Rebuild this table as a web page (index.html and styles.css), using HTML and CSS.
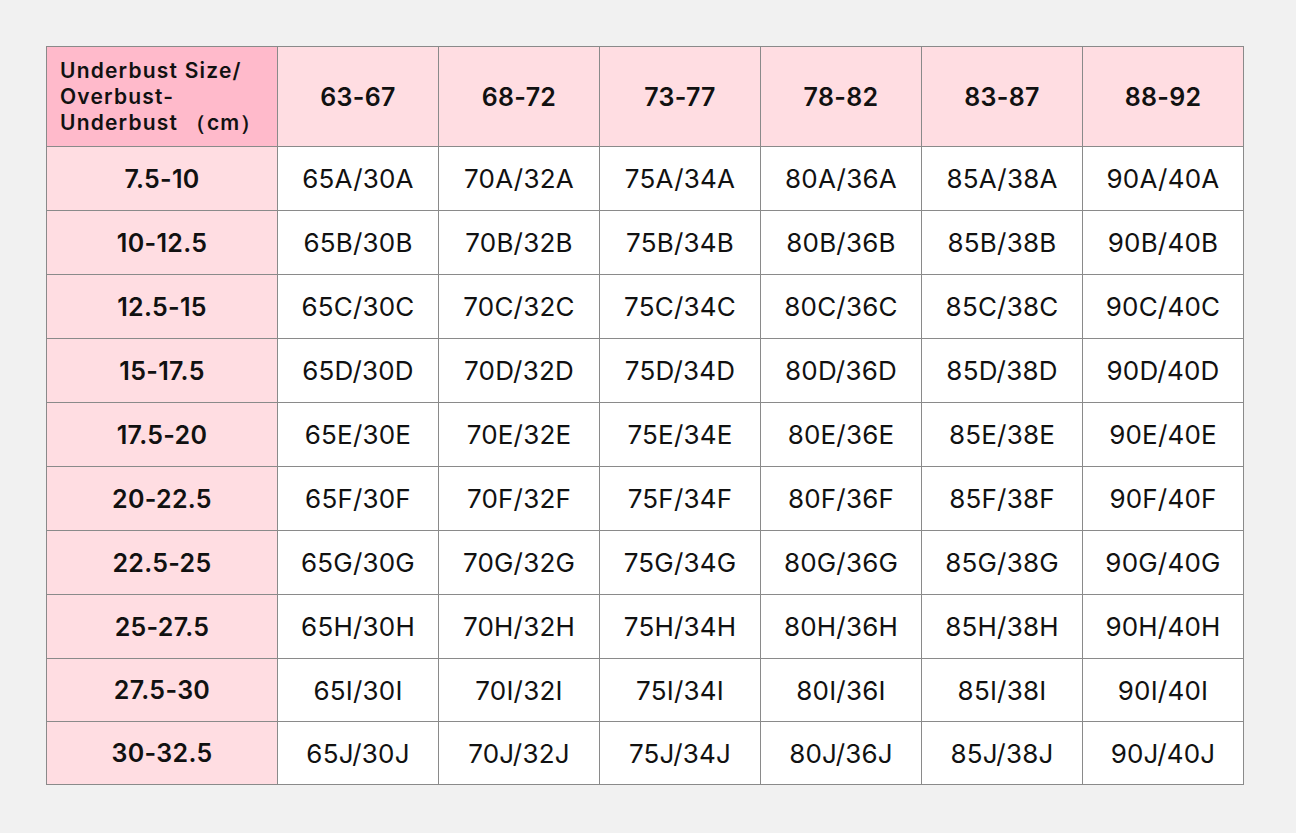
FILE: index.html
```html
<!DOCTYPE html>
<html>
<head>
<meta charset="utf-8">
<link rel="stylesheet" href="styles.css">
</head>
<body>
<table class="chart">
  <colgroup>
    <col class="col-label">
    <col class="col-size"><col class="col-size"><col class="col-size"><col class="col-size"><col class="col-size"><col class="col-size">
  </colgroup>
  <thead>
    <tr class="head-row">
      <th class="corner">Underbust Size/<br>Overbust-<br>Underbust （cm）</th>
      <th>63-67</th><th>68-72</th><th>73-77</th><th>78-82</th><th>83-87</th><th>88-92</th>
    </tr>
  </thead>
  <tbody>
    <tr><th>7.5-10</th><td>65A/30A</td><td>70A/32A</td><td>75A/34A</td><td>80A/36A</td><td>85A/38A</td><td>90A/40A</td></tr>
    <tr><th>10-12.5</th><td>65B/30B</td><td>70B/32B</td><td>75B/34B</td><td>80B/36B</td><td>85B/38B</td><td>90B/40B</td></tr>
    <tr><th>12.5-15</th><td>65C/30C</td><td>70C/32C</td><td>75C/34C</td><td>80C/36C</td><td>85C/38C</td><td>90C/40C</td></tr>
    <tr><th>15-17.5</th><td>65D/30D</td><td>70D/32D</td><td>75D/34D</td><td>80D/36D</td><td>85D/38D</td><td>90D/40D</td></tr>
    <tr><th>17.5-20</th><td>65E/30E</td><td>70E/32E</td><td>75E/34E</td><td>80E/36E</td><td>85E/38E</td><td>90E/40E</td></tr>
    <tr><th>20-22.5</th><td>65F/30F</td><td>70F/32F</td><td>75F/34F</td><td>80F/36F</td><td>85F/38F</td><td>90F/40F</td></tr>
    <tr><th>22.5-25</th><td>65G/30G</td><td>70G/32G</td><td>75G/34G</td><td>80G/36G</td><td>85G/38G</td><td>90G/40G</td></tr>
    <tr><th>25-27.5</th><td>65H/30H</td><td>70H/32H</td><td>75H/34H</td><td>80H/36H</td><td>85H/38H</td><td>90H/40H</td></tr>
    <tr class="short"><th>27.5-30</th><td>65I/30I</td><td>70I/32I</td><td>75I/34I</td><td>80I/36I</td><td>85I/38I</td><td>90I/40I</td></tr>
    <tr class="short"><th>30-32.5</th><td>65J/30J</td><td>70J/32J</td><td>75J/34J</td><td>80J/36J</td><td>85J/38J</td><td>90J/40J</td></tr>
  </tbody>
</table>
</body>
</html>
```
FILE: styles.css
```css
html, body {
  margin: 0;
  padding: 0;
  background: #f1f1f1;
}
body {
  padding: 46px 0 0 46px;
  font-family: Inter, "Liberation Sans", sans-serif;
  color: #111;
}
.chart {
  border-collapse: collapse;
  table-layout: fixed;
  width: 1198px;
}
.col-label {
  width: 231px;
}
.col-size {
  width: 161px;
}
.chart th, .chart td {
  border: 1px solid #8a8a8a;
  text-align: center;
  vertical-align: middle;
  padding: 0;
  font-size: 26px;
}
.chart th {
  font-weight: 600;
  background: #ffdde2;
  font-size: 25px;
  letter-spacing: 0.3px;
}
.chart td {
  font-weight: 400;
  background: #ffffff;
  letter-spacing: 0.2px;
}
.head-row th {
  height: 99px;
}
.chart .corner {
  background: #ffbacb;
  text-align: left;
  font-size: 21px;
  letter-spacing: 1.2px;
  line-height: 26px;
  padding: 0 2px 0 13px;
  white-space: nowrap;
}
.chart tbody tr {
  height: 64px;
}
.chart tbody tr.short {
  height: 63px;
}
```
